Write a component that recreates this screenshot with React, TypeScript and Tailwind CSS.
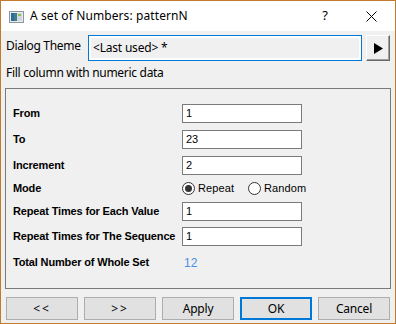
import React from 'react';

const ui = { fontFamily: '"Noto Sans", "Open Sans", sans-serif' };
const tahoma = { fontFamily: '"Liberation Sans", Arial, sans-serif' };

function AppIcon() {
  return (
    <svg width="15" height="12" viewBox="0 0 15 12">
      <rect x="0.5" y="0.5" width="14" height="11" fill="#e9ecef" stroke="#8c959c" />
      <rect x="2" y="2" width="6" height="8" fill="#3f7f86" />
      <rect x="2" y="2" width="3" height="8" fill="#2d6a9f" />
      <rect x="8" y="2" width="5" height="8" fill="#cfd8dc" />
      <rect x="9" y="3" width="3" height="2" fill="#8bc34a" />
    </svg>
  );
}

function TextBox({ value }: { value: string }) {
  return (
    <div
      className="w-[120px] h-[19px] bg-white border border-[#7a7a7a] flex items-center pl-[3px] text-[11px] text-black"
      style={tahoma}
    >
      {value}
    </div>
  );
}

function Radio({ checked, label }: { checked?: boolean; label: string }) {
  return (
    <div className="flex items-center">
      <div className="w-[13px] h-[13px] rounded-full border border-[#333] bg-white flex items-center justify-center">
        {checked && <div className="w-[7px] h-[7px] rounded-full bg-[#333]" />}
      </div>
      <span className="ml-[3px] text-[11px] tracking-[0.1px] text-black" style={tahoma}>
        {label}
      </span>
    </div>
  );
}

function Row({ label, children, className = '' }: { label: string; children: React.ReactNode; className?: string }) {
  return (
    <div className={`flex items-center ${className}`}>
      <div className="w-[169px] text-[11px] font-bold tracking-[-0.15px] text-black" style={tahoma}>
        {label}
      </div>
      {children}
    </div>
  );
}

export default function App() {
  const buttons = ['<<', '>>', 'Apply', 'OK', 'Cancel'];
  return (
    <div className="w-[396px] h-[324px] border border-[#c47a2c] bg-[#f0f0f0] flex flex-col overflow-hidden" style={ui}>
      {/* Title bar */}
      <div className="h-[30px] bg-white flex items-center shrink-0">
        <div className="ml-[8px] mt-[1px]">
          <AppIcon />
        </div>
        <span className="ml-[6px] text-[12px] tracking-[0.1px] text-black">A set of Numbers: patternN</span>
        <span className="ml-auto mr-[38px] text-[13px] text-black">?</span>
        <svg width="11" height="11" viewBox="0 0 11 11" className="mr-[18px]">
          <path d="M0.5 0.5 L10.5 10.5 M10.5 0.5 L0.5 10.5" stroke="#000" strokeWidth="1" />
        </svg>
      </div>

      {/* Dialog theme */}
      <div className="flex items-start mt-[4px] pl-[5px] h-[26px]">
        <span className="w-[82px] pt-[2px] text-[12px] tracking-[-0.3px] text-black">Dialog Theme</span>
        <div className="w-[274px] h-[26px] border border-[#0078d7] bg-white p-[2px]">
          <div className="h-full bg-[#f0f0f0] flex items-center pl-[2px] text-[12px] tracking-[-0.2px] text-black">
            &lt;Last used&gt; *
          </div>
        </div>
        <div className="ml-[4px] w-[24px] h-[26px] bg-[#f0f0f0] border border-t-white border-l-white border-r-[#696969] border-b-[#696969] flex items-center justify-center shadow-[inset_-1px_-1px_0_#a0a0a0]">
          <svg width="9" height="11" viewBox="0 0 9 11">
            <path d="M0 0 L9 5.5 L0 11 Z" fill="#000" />
          </svg>
        </div>
      </div>

      <div className="pl-[5px] mt-[3px] text-[12px] tracking-[-0.3px] text-black">Fill column with numeric data</div>

      {/* Group box */}
      <div className="ml-[4px] mt-[6px] w-[386px] h-[201px] border border-[#7a7a7a] pl-[7px] pt-[15px] flex flex-col">
        <Row label="From">
          <TextBox value="1" />
        </Row>
        <Row label="To" className="mt-[7px]">
          <TextBox value="23" />
        </Row>
        <Row label="Increment" className="mt-[7px]">
          <TextBox value="2" />
        </Row>
        <Row label="Mode" className="mt-[6px] h-[15px]">
          <Radio checked label="Repeat" />
          <div className="ml-[14px]">
            <Radio label="Random" />
          </div>
        </Row>
        <Row label="Repeat Times for Each Value" className="mt-[6px]">
          <TextBox value="1" />
        </Row>
        <Row label="Repeat Times for The Sequence" className="mt-[6px]">
          <TextBox value="1" />
        </Row>
        <Row label="Total Number of Whole Set" className="mt-[7px] h-[19px]">
          <span className="ml-[2px] text-[12px] text-[#4a8fe0]" style={tahoma}>
            12
          </span>
        </Row>
      </div>

      {/* Buttons */}
      <div className="flex gap-[6px] ml-[5px] mt-[8px]">
        {buttons.map((b) => (
          <div
            key={b}
            className={`w-[72px] h-[23px] flex items-center justify-center text-[12px] text-black bg-[#e1e1e1] ${
              b === 'OK' ? 'border-2 border-[#0078d7]' : 'border border-[#adadad]'
            } ${b.startsWith('<') || b.startsWith('>') ? 'tracking-[2px] text-[10px]' : 'tracking-[-0.2px]'}`}
          >
            {b}
          </div>
        ))}
      </div>
    </div>
  );
}
